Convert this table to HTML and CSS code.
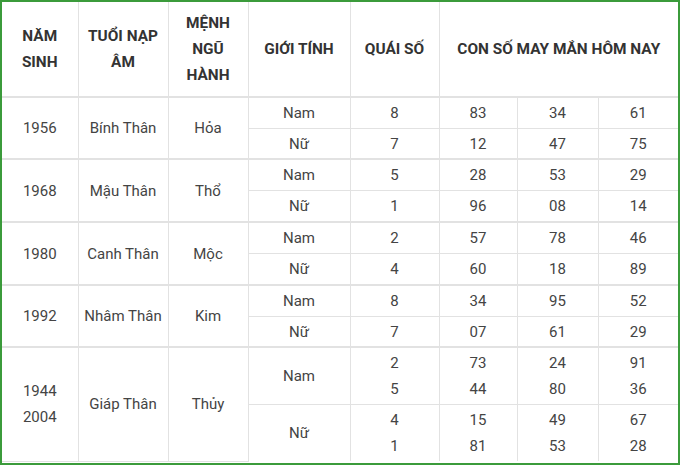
FILE: index.html
```html
<!DOCTYPE html>
<html lang="vi">
<head>
<meta charset="utf-8">
<link rel="stylesheet" href="styles.css">
</head>
<body>
<div class="frame">
<table class="tbl">
<colgroup>
<col class="c1"><col class="c2"><col class="c3"><col class="c4"><col class="c5"><col class="c6"><col class="c7"><col class="c8">
</colgroup>
<thead>
<tr class="head">
<th>NĂM<br>SINH</th>
<th>TUỔI NẠP<br>ÂM</th>
<th>MỆNH<br>NGŨ<br>HÀNH</th>
<th>GIỚI TÍNH</th>
<th>QUÁI SỐ</th>
<th colspan="3">CON SỐ MAY MẮN HÔM NAY</th>
</tr>
</thead>
<tbody>
<tr class="r"><td rowspan="2" class="g">1956</td><td rowspan="2" class="g">Bính Thân</td><td rowspan="2" class="g">Hỏa</td><td>Nam</td><td>8</td><td>83</td><td>34</td><td>61</td></tr>
<tr class="r gb short"><td>Nữ</td><td>7</td><td>12</td><td>47</td><td>75</td></tr>
<tr class="r"><td rowspan="2" class="g">1968</td><td rowspan="2" class="g">Mậu Thân</td><td rowspan="2" class="g">Thổ</td><td>Nam</td><td>5</td><td>28</td><td>53</td><td>29</td></tr>
<tr class="r gb"><td>Nữ</td><td>1</td><td>96</td><td>08</td><td>14</td></tr>
<tr class="r"><td rowspan="2" class="g">1980</td><td rowspan="2" class="g">Canh Thân</td><td rowspan="2" class="g">Mộc</td><td>Nam</td><td>2</td><td>57</td><td>78</td><td>46</td></tr>
<tr class="r gb"><td>Nữ</td><td>4</td><td>60</td><td>18</td><td>89</td></tr>
<tr class="r"><td rowspan="2" class="g">1992</td><td rowspan="2" class="g">Nhâm Thân</td><td rowspan="2" class="g">Kim</td><td>Nam</td><td>8</td><td>34</td><td>95</td><td>52</td></tr>
<tr class="r gb short"><td>Nữ</td><td>7</td><td>07</td><td>61</td><td>29</td></tr>
<tr class="r2"><td rowspan="2" class="g multi">1944<br>2004</td><td rowspan="2" class="g">Giáp Thân</td><td rowspan="2" class="g">Thủy</td><td>Nam</td><td class="multi">2<br>5</td><td class="multi">73<br>44</td><td class="multi">24<br>80</td><td class="multi">91<br>36</td></tr>
<tr class="r2 last"><td>Nữ</td><td class="multi">4<br>1</td><td class="multi">15<br>81</td><td class="multi">49<br>53</td><td class="multi">67<br>28</td></tr>
</tbody>
</table>
</div>
</body>
</html>
```

FILE: styles.css
```css
html, body {
  margin: 0;
  padding: 0;
  background: #ffffff;
}
.frame {
  width: 680px;
  height: 465px;
  box-sizing: border-box;
  border: 2px solid #3b9b3b;
  overflow: hidden;
}
.tbl {
  width: 676px;
  table-layout: fixed;
  border-collapse: collapse;
  font-family: Roboto, "Liberation Sans", sans-serif;
  font-size: 15px;
  color: #444444;
}
.c1 { width: 76px; }
.c2 { width: 90px; }
.c3 { width: 80px; }
.c4 { width: 102px; }
.c5 { width: 89px; }
.c6 { width: 78px; }
.c7 { width: 81px; }
.c8 { width: 80px; }
.tbl th,
.tbl td {
  border: 1px solid #e2e2e2;
  text-align: center;
  vertical-align: middle;
  padding: 0;
}
.tbl tr:first-child th,
.tbl tr:first-child td { border-top: none; }
.tbl th:first-child,
.tbl td.g:first-child { border-left: none; }
.tbl th:last-child,
.tbl td:last-child { border-right: none; }
.head th {
  height: 94px;
  font-weight: 700;
  font-size: 15.4px;
  color: #333333;
  line-height: 26px;
  border-bottom: 2px solid #e2e2e2;
}
.r td {
  height: 30px;
  line-height: 20px;
}
.r.short td { height: 29px; }
.gb td, .r td.g { border-bottom: 2px solid #e2e2e2; }
.r2 td {
  height: 56px;
}
.last td { border-bottom: none; }
.multi {
  line-height: 26px;
}
```
